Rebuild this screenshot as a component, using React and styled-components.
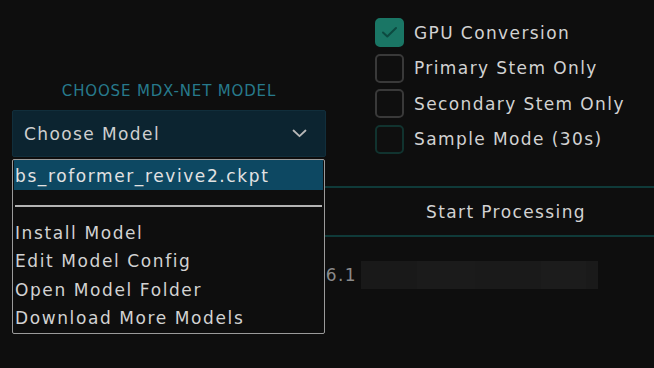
import React from 'react';
import styled, { createGlobalStyle } from 'styled-components';

const GlobalStyle = createGlobalStyle`
  html, body {
    margin: 0;
    padding: 0;
    background: #0e0e0e;
    overflow: hidden;
  }
  * {
    box-sizing: border-box;
  }
`;

const Page = styled.div`
  width: 654px;
  height: 368px;
  padding-left: 12px;
  overflow: hidden;
  background: #0e0e0e;
  color: #d2d2d2;
  font-family: 'DejaVu Sans', 'Liberation Sans', sans-serif;
  font-size: 17px;
  letter-spacing: 1.4px;
`;

const TopRow = styled.div`
  display: grid;
  grid-template-columns: 314px 1fr;
  height: 157px;
`;

const ModelColumn = styled.div`
  position: relative;
  display: flex;
  flex-direction: column;
  justify-content: flex-end;
  z-index: 5;
`;

const SectionLabel = styled.div`
  text-align: center;
  font-size: 15px;
  line-height: 18px;
  letter-spacing: 0.85px;
  color: #277a8c;
  margin-bottom: 10px;
`;

const Select = styled.div`
  height: 47px;
  display: flex;
  align-items: center;
  justify-content: space-between;
  padding: 0 18px 0 11px;
  background: #0c2430;
  border: 1px solid #112e3b;
  border-radius: 2px;
  color: #cfcfcf;
`;

const Menu = styled.div`
  position: absolute;
  top: 159px;
  left: 0;
  width: 313px;
  height: 175px;
  padding: 0 2px;
  background: #0e0e0e;
  border: 1px solid #9a9a9a;
  border-radius: 2px;
`;

const MenuItem = styled.div`
  height: ${p => (p.active ? '30px' : '28.3px')};
  line-height: ${p => (p.active ? '32px' : '28.3px')};
  padding-left: 1px;
  margin: 0 -1px;
  white-space: nowrap;
  letter-spacing: 1.6px;
  background: ${p => (p.active ? '#0d4862' : 'transparent')};
  color: ${p => (p.active ? '#e2e2e2' : '#d2d2d2')};
`;

const Separator = styled.div`
  height: 2px;
  background: #b4b4b4;
  margin: 15px 0 12px;
`;

const OptionsColumn = styled.div`
  display: flex;
  flex-direction: column;
  gap: 6.5px;
  padding: 18px 0 0 49px;
`;

const Option = styled.label`
  display: flex;
  align-items: center;
  gap: 10px;
  height: 29px;
  white-space: nowrap;
`;

const Box = styled.span`
  width: 29px;
  height: 29px;
  flex-shrink: 0;
  border-radius: 5px;
  display: flex;
  align-items: center;
  justify-content: center;
  background: ${p => (p.checked ? '#1a7665' : '#0f0f0f')};
  border: 2px solid ${p => (p.checked ? '#1a7665' : p.tone === 'teal' ? '#11332f' : '#393939')};
`;

const ProcessRow = styled.div`
  display: grid;
  grid-template-columns: 288px 1fr;
  margin-top: 29px;
`;

const StartButton = styled.div`
  height: 51px;
  display: flex;
  align-items: center;
  justify-content: center;
  padding-left: 58px;
  border-top: 2px solid #0f3a39;
  border-bottom: 2px solid #0f3a39;
  color: #d2d2d2;
`;

const VersionRow = styled.div`
  display: grid;
  grid-template-columns: 345px 237px;
  column-gap: 4px;
  margin-top: 24px;
  height: 28px;
`;

const VersionText = styled.div`
  text-align: right;
  line-height: 28px;
  color: #8a8a8a;
  white-space: nowrap;
  overflow: hidden;
`;

const Redacted = styled.div`
  display: flex;
  height: 28px;
`;

const Segment = styled.div`
  height: 100%;
  background: ${p => p.shade};
`;

const Chevron = () => (
  <svg width="15" height="9" viewBox="0 0 15 9" fill="none">
    <path d="M1.5 1.5 L7.5 7.2 L13.5 1.5" stroke="#b8b8b8" strokeWidth="1.8" strokeLinecap="round" strokeLinejoin="round" />
  </svg>
);

const Check = () => (
  <svg width="17" height="13" viewBox="0 0 17 13" fill="none">
    <path d="M2 6.5 L6.3 10.5 L15 2" stroke="#0c4a40" strokeWidth="2" strokeLinecap="round" strokeLinejoin="round" />
  </svg>
);

const options = [
  { label: 'GPU Conversion', checked: true },
  { label: 'Primary Stem Only' },
  { label: 'Secondary Stem Only' },
  { label: 'Sample Mode (30s)', tone: 'teal' },
];

const segments = [
  ['#191919', 56],
  ['#1b1b1b', 58],
  ['#1a1a1a', 66],
  ['#1c1c1c', 45],
  ['#1a1a1a', 12],
];

export default function App() {
  return (
    <Page>
      <GlobalStyle />
      <TopRow>
        <ModelColumn>
          <SectionLabel>CHOOSE MDX-NET MODEL</SectionLabel>
          <Select>
            <span>Choose Model</span>
            <Chevron />
          </Select>
          <Menu>
            <MenuItem active>bs_roformer_revive2.ckpt</MenuItem>
            <Separator />
            <MenuItem>Install Model</MenuItem>
            <MenuItem>Edit Model Config</MenuItem>
            <MenuItem>Open Model Folder</MenuItem>
            <MenuItem>Download More Models</MenuItem>
          </Menu>
        </ModelColumn>
        <OptionsColumn>
          {options.map(o => (
            <Option key={o.label}>
              <Box checked={o.checked} tone={o.tone}>{o.checked && <Check />}</Box>
              {o.label}
            </Option>
          ))}
        </OptionsColumn>
      </TopRow>
      <ProcessRow>
        <div />
        <StartButton>Start Processing</StartButton>
      </ProcessRow>
      <VersionRow>
        <VersionText>UVR Version 5.6.1</VersionText>
        <Redacted>
          {segments.map(([shade, w], i) => (
            <Segment key={i} shade={shade} style={{ width: w }} />
          ))}
        </Redacted>
      </VersionRow>
    </Page>
  );
}
